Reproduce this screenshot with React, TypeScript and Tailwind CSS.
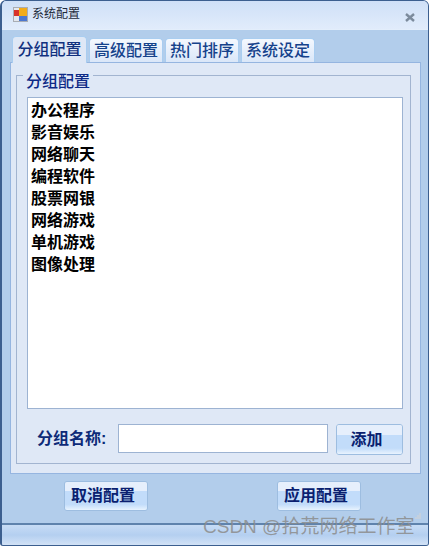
const cjk = "font-['Liberation_Sans','Noto_Sans_CJK_SC',sans-serif]";

const groups = ["办公程序", "影音娱乐", "网络聊天", "编程软件", "股票网银", "网络游戏", "单机游戏", "图像处理"];

function Tab({ label, active, className }: { label: string; active?: boolean; className: string }) {
  return (
    <div
      className={`flex items-center justify-center rounded-t-[4px] border border-b-0 border-[#a9cdf0] text-[16px] leading-none font-medium ${
        active
          ? "relative z-10 h-[27px] bg-[#dfe8f6] text-[#10307f]"
          : "h-[25px] bg-gradient-to-b from-[#f4f8fe] to-[#d9e6f8] text-[#15428b]"
      } ${className}`}
    >
      {label}
    </div>
  );
}

function SkinButton({ label, className }: { label: string; className: string }) {
  return (
    <button className={`flex flex-col overflow-hidden rounded-[3px] border border-[#9dbde0] p-0 ${className}`}>
      <span className="flex h-full w-full items-center justify-center bg-[linear-gradient(#e6effc_0,#e6effc_33%,#c2dcfa_33%,#c2dcfa_80%,#e8f3fe_100%)] pr-[6px] text-[16px] leading-none font-bold text-[#0a1f70]">
        {label}
      </span>
    </button>
  );
}

export default function App() {
  return (
    <div className={`relative flex h-[546px] w-[429px] flex-col overflow-hidden rounded-t-[6px] rounded-b-[3px] border border-l-2 border-[#3c5f8f] bg-[#b2cdeb] ${cjk}`}>
      <div className="flex h-[29px] shrink-0 items-center border-b border-[#e3eefb] bg-gradient-to-b from-[#cfe0f7] to-[#e1ecfb] pb-[2px] pl-[11px] pr-[10px]">
        <svg width="15" height="15" viewBox="0 0 15 15" className="shrink-0">
          <rect x="0.5" y="0.5" width="14" height="14" fill="#e4e8ee" stroke="#a9adb4" />
          <rect x="1" y="3" width="5" height="6" fill="#d8322a" />
          <rect x="6" y="1" width="8" height="8" fill="#f2ac1a" />
          <rect x="6" y="9" width="8" height="5" fill="#4c78d0" />
        </svg>
        <span className="ml-[4px] text-[12px] leading-none text-[#1d2a3a]">系统配置</span>
        <svg width="10" height="9" viewBox="0 0 10 9" className="ml-auto mr-[3px] mt-[6px]">
          <path d="M1 1 L9 8 M9 1 L1 8" stroke="#7c8b9c" strokeWidth="2.4" />
        </svg>
      </div>

      <div className="flex flex-1 flex-col pl-[8px] pr-[7px] pt-[6px]">
        <div className="flex h-[27px] items-end gap-[2px] pl-[2px]">
          <Tab label="分组配置" active className="w-[75px]" />
          <Tab label="高级配置" className="w-[74px]" />
          <Tab label="热门排序" className="w-[74px]" />
          <Tab label="系统设定" className="w-[74px]" />
        </div>

        <div className="-mt-px h-[412px] border border-[#95b5e0] bg-[#dfe8f6] pl-[5px] pr-[9px] pt-[12px]">
          <div className="relative h-[389px] border border-[#a2b4d0] pl-[10px] pr-[7px] pt-[21px]">
            <span className="absolute left-[6px] top-[-4px] bg-[#dfe8f6] px-[3px] text-[16px] leading-[20px] font-medium text-[#0d2a86]">分组配置</span>
            <div className="h-[312px] border border-[#9db3d2] bg-white px-[3px] pt-[2px]">
              {groups.map((g) => (
                <div key={g} className="h-[22px] text-[16px] leading-[22px] font-bold text-black">
                  {g}
                </div>
              ))}
            </div>
            <div className="mt-[15px] flex items-start">
              <label className="ml-[10px] mt-[6px] w-[81px] text-[16px] leading-[18px] font-bold whitespace-nowrap text-[#0d2a78]">分组名称:</label>
              <input className="h-[29px] w-[210px] border border-[#9db3d2] bg-white outline-none" />
              <SkinButton label="添加" className="ml-[8px] h-[31px] w-[67px]" />
            </div>
          </div>
        </div>

        <div className="mt-[7px] flex pl-[54px]">
          <SkinButton label="取消配置" className="h-[30px] w-[84px]" />
          <SkinButton label="应用配置" className="ml-[129px] h-[30px] w-[84px]" />
        </div>
      </div>

      <div className="h-[22px] shrink-0 border-t-2 border-[#5f83ad] bg-gradient-to-b from-[#c7dcf5] via-[#b4cff0] to-[#d2e2f6]" />

      <svg width="6" height="6" viewBox="0 0 6 6" className="absolute right-[7px] top-[512px] text-[#c3d0df]">
        <path d="M4 0h2v2H4z M2 2h2v2H2z M4 2h2v2H4z M0 4h2v2H0z M2 4h2v2H2z M4 4h2v2H4z" fill="currentColor" />
      </svg>

      <div className="absolute left-[201px] top-[514px] text-[19px] leading-[24px] whitespace-nowrap text-[#8c8c8c]/85">CSDN @拾荒网络工作室</div>
    </div>
  );
}
